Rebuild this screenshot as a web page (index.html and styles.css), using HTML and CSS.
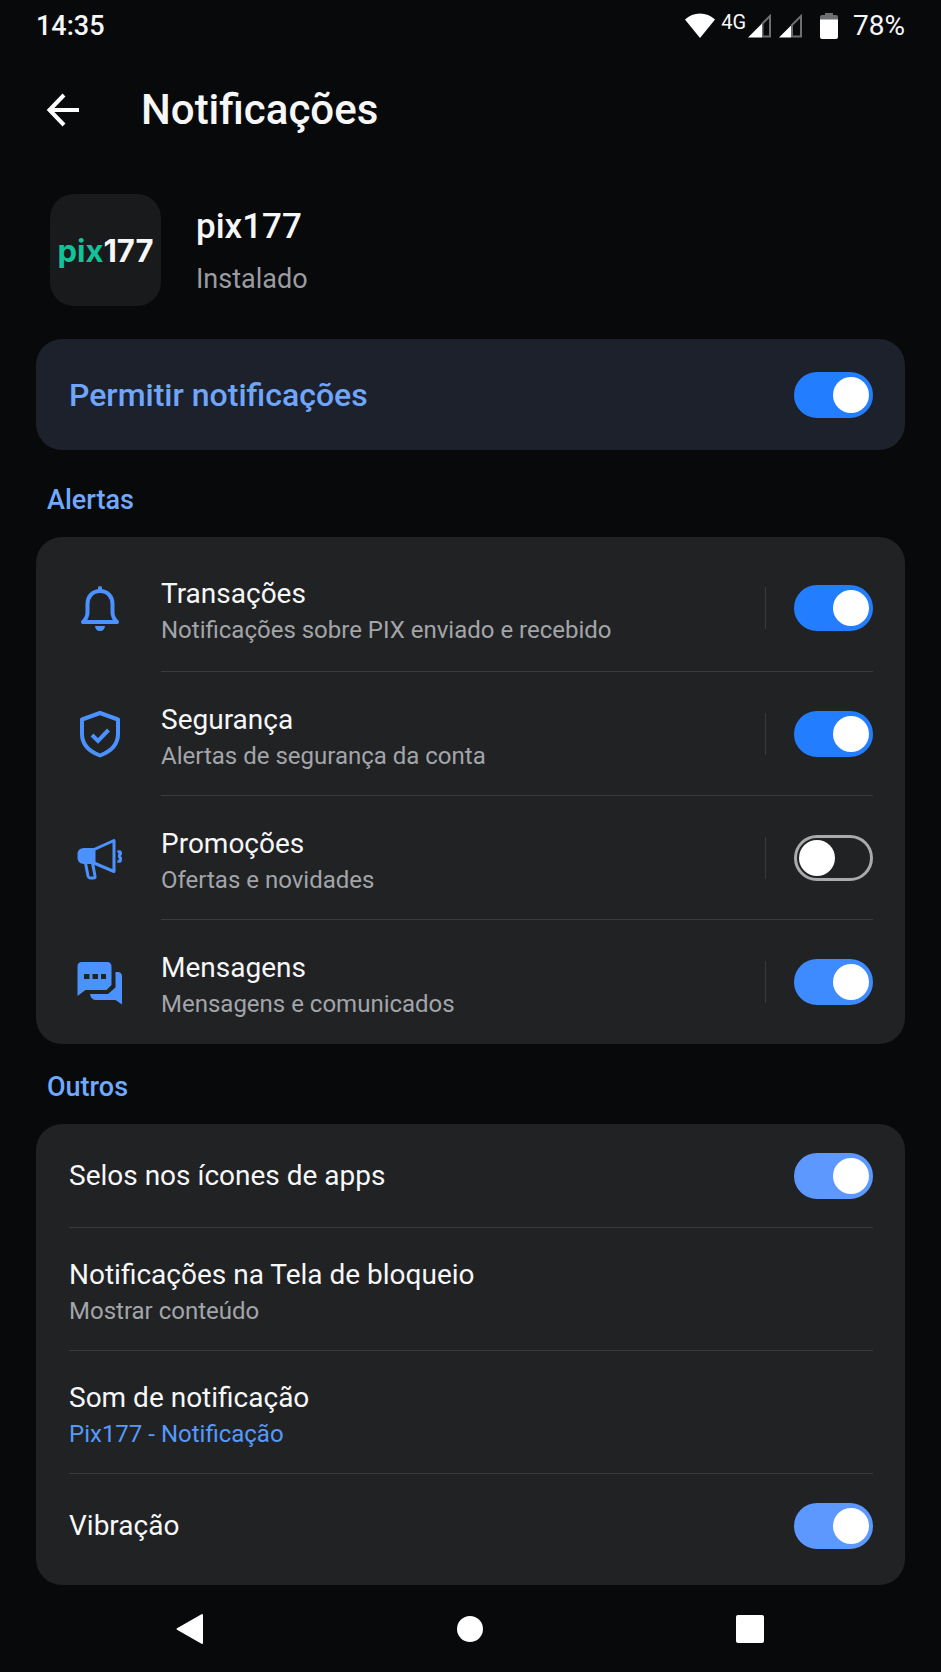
FILE: index.html
```html
<!DOCTYPE html>
<html lang="pt-BR">
<head>
<meta charset="utf-8">
<meta name="viewport" content="width=device-width, initial-scale=1">
<title>Notificações</title>
<link rel="stylesheet" href="styles.css">
</head>
<body>

<div class="statusbar">
	<span class="clock">14:35</span>
	<div class="indicators">
		<svg class="wifi" width="30" height="26" viewBox="0 0 30 26"><path d="M0 6.500C8-1.500 22-1.500 30 6.500L15 25z" fill="#fff"/></svg>
		<span class="net">4G</span>
		<svg class="signal" width="24" height="24" viewBox="0 0 24 24"><path d="M14.500 9.500L22 2v20.500h-7.500z" fill="none" stroke="#6d6e70" stroke-width="2"/><path d="M0 23.500L14 9.500v14z" fill="#fff"/></svg>
		<svg class="signal" width="24" height="24" viewBox="0 0 24 24"><path d="M13 11L22 2v20.500h-9z" fill="none" stroke="#6d6e70" stroke-width="2"/><path d="M0 23.500L12 11.500v12z" fill="#fff"/></svg>
		<svg class="battery" width="18" height="28" viewBox="0 0 18 28"><path d="M5 1h8v2h3q2 0 2 2v3H0V5q0-2 2-2h3z" fill="#6d6e70"/><path d="M0 7.500h18V25q0 2-2 2H2q-2 0-2-2z" fill="#fff"/></svg>
		<span class="percent">78%</span>
	</div>
</div>

<header class="topbar">
	<button class="back" type="button" aria-label="Voltar">
		<svg width="34" height="34" viewBox="0 0 34 34"><path d="M33 17H4M18 2L3.500 17l14.500 15" fill="none" stroke="#fff" stroke-width="4"/></svg>
	</button>
	<h1>Notificações</h1>
</header>

<main>
	<section class="app">
		<div class="app-icon"><span class="pix">pix</span>177</div>
		<div class="app-text">
			<h2 class="app-name">pix177</h2>
			<p class="app-state">Instalado</p>
		</div>
	</section>

	<label class="card allow">
		<span>Permitir notificações</span>
		<input class="switch" type="checkbox" role="switch" checked>
	</label>

	<h3 class="section-title">Alertas</h3>
	<div class="card alerts">
		<label class="row">
			<svg class="icon" width="48" height="48" viewBox="0 0 48 48">
				<path d="M24 3v3M24 6C16 6 11.500 12 11.500 19v8.500c0 4-1.500 6.500-4.500 9.500h34c-3-3-4.500-5.500-4.500-9.500V19C36.500 12 32 6 24 6z" fill="none" stroke="#4c92ff" stroke-width="4" stroke-linejoin="round" stroke-linecap="round"/>
				<path d="M19 41h10q-.5 5-5 5t-5-5z" fill="#4c92ff"/>
			</svg>
			<span class="body">
				<span class="text"><span class="name">Transações</span><span class="desc">Notificações sobre PIX enviado e recebido</span></span>
				<span class="split"></span>
				<input class="switch" type="checkbox" role="switch" checked>
			</span>
		</label>
		<label class="row">
			<svg class="icon" width="48" height="48" viewBox="0 0 48 48">
				<path d="M24 3l18 6.500V24c0 11-7.500 17.500-18 21.500C13.500 41.500 6 35 6 24V9.500z" fill="none" stroke="#4c92ff" stroke-width="4" stroke-linejoin="round"/>
				<path d="M16 25l6 6 10.500-11" fill="none" stroke="#4c92ff" stroke-width="4"/>
			</svg>
			<span class="body">
				<span class="text"><span class="name">Segurança</span><span class="desc">Alertas de segurança da conta</span></span>
				<span class="split"></span>
				<input class="switch" type="checkbox" role="switch" checked>
			</span>
		</label>
		<label class="row">
			<svg class="icon" width="48" height="48" viewBox="0 0 48 48">
				<path d="M19 14H8q-6.500 0-6.500 6.500v3Q1.500 30 8 30h11z" fill="#4c92ff"/>
				<path d="M18 15.500L38 6.500v31L18 29z" fill="none" stroke="#4c92ff" stroke-width="3" stroke-linejoin="round"/>
				<path d="M9.500 29l2.500 13q.5 2 2.500 2h3q2 0 1.500-2l-2.500-13" fill="none" stroke="#4c92ff" stroke-width="3"/>
				<path d="M41.500 18q3-1 3 1v1q-2.500 2 0 4v2q0 2-3 1" fill="none" stroke="#4c92ff" stroke-width="3" stroke-linejoin="round"/>
			</svg>
			<span class="body">
				<span class="text"><span class="name">Promoções</span><span class="desc">Ofertas e novidades</span></span>
				<span class="split"></span>
				<input class="switch" type="checkbox" role="switch">
			</span>
		</label>
		<label class="row">
			<svg class="icon" width="48" height="48" viewBox="0 0 48 48">
				<path d="M6 4h25q4.500 0 4.500 4.500v18.500l-5 5H9.500L1.500 38V8.500Q1.500 4 6 4z" fill="#4c92ff"/>
				<path d="M8 16h5.500v5H8zM16.500 16h5.500v5h-5.500zM25 16h5v5h-5z" fill="#202224"/>
				<path d="M39.500 14h2q4.500 0 4.500 4.500v28L39.500 42H20q-5 0-6-6h18l7.500-6.500z" fill="#4c92ff"/>
			</svg>
			<span class="body">
				<span class="text"><span class="name">Mensagens</span><span class="desc">Mensagens e comunicados</span></span>
				<span class="split"></span>
				<input class="switch mid" type="checkbox" role="switch" checked>
			</span>
		</label>
	</div>

	<h3 class="section-title">Outros</h3>
	<div class="card others">
		<label class="line short">
			<span class="name">Selos nos ícones de apps</span>
			<input class="switch soft" type="checkbox" role="switch" checked>
		</label>
		<button class="line" type="button">
			<span class="text"><span class="name">Notificações na Tela de bloqueio</span><span class="desc">Mostrar conteúdo</span></span>
		</button>
		<button class="line" type="button">
			<span class="text"><span class="name">Som de notificação</span><span class="desc link">Pix177 - Notificação</span></span>
		</button>
		<label class="line short">
			<span class="name">Vibração</span>
			<input class="switch soft" type="checkbox" role="switch" checked>
		</label>
	</div>
</main>

<nav class="navbar">
	<button type="button" aria-label="Voltar">
		<svg width="32" height="32" viewBox="0 0 32 32"><path d="M3.500 16L28 2v28z" fill="#fff" stroke="#fff" stroke-width="2" stroke-linejoin="round"/></svg>
	</button>
	<button type="button" aria-label="Início">
		<svg width="32" height="32" viewBox="0 0 32 32"><circle cx="16" cy="16" r="13" fill="#fff"/></svg>
	</button>
	<button type="button" aria-label="Recentes">
		<svg width="32" height="32" viewBox="0 0 32 32"><rect x="1" y="2" width="28" height="28" rx="2" fill="#fff"/></svg>
	</button>
</nav>

</body>
</html>
```
FILE: styles.css
```css
* {
	box-sizing: border-box;
}

body {
	margin: 0;
	background: #07090b;
	color: #f7f7f8;
	font-family: Roboto, "Liberation Sans", sans-serif;
	font-size: 28px;
}

h1, h2, h3, p {
	margin: 0;
	font-weight: 500;
}

button {
	margin: 0;
	padding: 0;
	border: 0;
	background: none;
	color: inherit;
	font: inherit;
	text-align: left;
}

svg {
	display: block;
	flex: none;
}

/* status bar */

.statusbar {
	display: flex;
	justify-content: space-between;
	align-items: center;
	height: 51px;
	padding: 0 36px;
}

.clock {
	font-size: 27px;
	font-weight: 500;
}

.indicators {
	display: flex;
	align-items: center;
}

.net {
	margin: 0 2px 8px 6px;
	font-size: 20px;
	line-height: 20px;
}

.signal {
	margin-right: 7px;
}

.battery {
	margin: 0 15px 0 10px;
}

/* header */

.topbar {
	display: flex;
	align-items: center;
	height: 117px;
	padding: 0 46px;
}

.back {
	margin-right: 61px;
}

h1 {
	font-size: 42px;
	line-height: 52px;
}

main {
	padding: 0 36px;
}

.app {
	display: flex;
	align-items: center;
	gap: 35px;
	padding: 26px 14px 33px;
}

.app-icon {
	display: flex;
	justify-content: center;
	align-items: center;
	width: 111px;
	height: 112px;
	border-radius: 24px;
	background: #191a1b;
	font-family: Inter, sans-serif;
	font-size: 31px;
	font-weight: 700;
}

.pix {
	color: #12c39a;
}

.app-text {
	padding-top: 6px;
}

.app-name {
	font-size: 35px;
	line-height: 52px;
}

.app-state {
	color: #9b9ca1;
	font-size: 27px;
	font-weight: 400;
	line-height: 52px;
}

/* cards */

.card {
	border-radius: 26px;
	background: #202224;
}

.allow {
	display: flex;
	justify-content: space-between;
	align-items: center;
	height: 111px;
	margin-bottom: 31px;
	padding: 0 32px 0 33px;
	background: #1c212c;
	color: #6fa6fb;
	font-size: 32px;
	font-weight: 500;
}

.section-title {
	margin: 24px 0 18px;
	padding-left: 11px;
	color: #70a9fd;
	font-size: 27px;
	line-height: 38px;
}

.allow + .section-title {
	margin-top: 0;
}

.alerts {
	padding: 8px 32px 0 33px;
}

.row {
	display: flex;
	align-items: center;
}

.icon {
	margin: 0 37px 0 7px;
}

.body {
	display: flex;
	flex: 1;
	align-items: center;
	height: 124px;
	border-bottom: 1px solid #393b3d;
}

.row:first-child .body {
	height: 127px;
}

.row:last-child .body {
	border-bottom: 0;
}

.text {
	flex: 1;
	padding-top: 2px;
}

.name,
.desc {
	display: block;
}

.name {
	font-size: 28px;
	line-height: 42px;
}

.desc {
	color: #a3a5a9;
	font-size: 24px;
	line-height: 30px;
}

.link {
	color: #559afa;
}

.split {
	width: 1px;
	height: 42px;
	margin-right: 28px;
	background: #37393b;
}

.others {
	padding: 0 32px 7px 33px;
}

.line {
	display: flex;
	justify-content: space-between;
	align-items: center;
	width: 100%;
	height: 123px;
	border-bottom: 1px solid #393b3d;
}

.short {
	height: 104px;
}

.line:last-child {
	border-bottom: 0;
}

/* switches */

.switch {
	appearance: none;
	display: flex;
	flex: none;
	align-items: center;
	width: 79px;
	height: 46px;
	margin: 0;
	padding: 0 1px 0 2px;
	border: 3px solid #a9aaab;
	border-radius: 23px;
}

.switch::before {
	content: "";
	width: 36px;
	height: 36px;
	border-radius: 50%;
	background: #fff;
}

.switch:checked {
	justify-content: flex-end;
	border-color: #237eff;
	background: #237eff;
}

.mid:checked {
	border-color: #3d8bff;
	background: #3d8bff;
}

.soft:checked {
	border-color: #5c98ff;
	background: #5c98ff;
}

/* navigation */

.navbar {
	display: flex;
	justify-content: space-around;
	align-items: center;
	height: 87px;
	padding: 0 50px;
}
```
